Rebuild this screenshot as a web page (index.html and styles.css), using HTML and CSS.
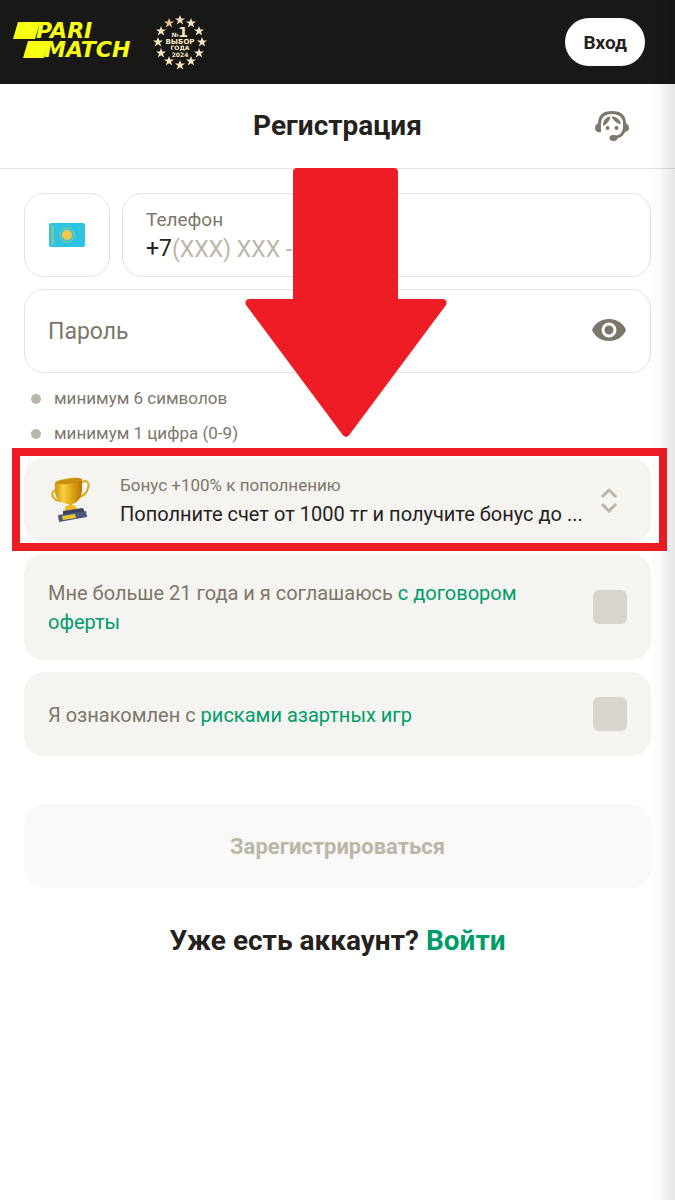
FILE: index.html
```html
<!DOCTYPE html>
<html lang="ru">
<head>
    <meta charset="UTF-8">
    <meta name="viewport" content="width=device-width, initial-scale=1.0">
    <title>Регистрация</title>
    <link rel="stylesheet" href="styles.css">
</head>
<body>
    <header class="topbar">
        <a class="logo" href="#" aria-label="Parimatch">
            <svg width="122" height="48" viewBox="0 0 122 48">
                <path d="M6 6H28L23 23H1ZM16 25H37L32 42H11Z" />
                <text x="24" y="22">PARI</text>
                <text x="32" y="41">MATCH</text>
            </svg>
        </a>
        <svg class="award" width="56" height="56" viewBox="0 0 56 56">
            <defs>
                <path id="star" d="M0-5 1.300-1.600H5L2 .8 3.200 4.500 0 2.300-3.200 4.500-2 .8-5-1.600H-1.300Z" />
            </defs>
            <use href="#star" x="28" y="6" />
            <use href="#star" x="39" y="9" />
            <use href="#star" x="47" y="17" />
            <use href="#star" x="50" y="28" />
            <use href="#star" x="47" y="39" />
            <use href="#star" x="39" y="47" />
            <use href="#star" x="28" y="51" />
            <use href="#star" x="17" y="47" />
            <use href="#star" x="9" y="39" />
            <use href="#star" x="6" y="28" />
            <use href="#star" x="9" y="17" />
            <use class="gold" href="#star" x="17" y="9" />
            <text x="23" y="23" font-size="6">№</text>
            <text x="31" y="23" font-size="14">1</text>
            <text x="28" y="30" font-size="7">ВЫБОР</text>
            <text x="28" y="36" font-size="6">ГОДА</text>
            <text x="28" y="43" font-size="6">2024</text>
        </svg>
        <button class="login-btn" type="button">Вход</button>
    </header>

    <div class="title-bar">
        <h1>Регистрация</h1>
        <button class="support" type="button" aria-label="Поддержка">
            <svg width="34" height="32" viewBox="0 0 34 32">
                <path class="line" d="M4.500 14C4.500 6 9.500 2.500 17 2.500S29.500 6 29.500 14V18C29 24 25 27 19 27.500" />
                <path d="M5 12C2.500 13 0 15 0 18S2.500 23 6 22V13ZM29 12C31.500 13 34 15 34 18S31.500 22 28.500 22Z" />
                <path d="M8 16C8 10 11 7 15.500 6.500C15 10.500 12 14 8 16ZM16.500 6.500C21 6.500 25 9 26 14C21.500 13.500 18.500 10.500 16.500 6.500Z" />
                <circle cx="12.500" cy="18" r="2" />
                <circle cx="21.500" cy="18" r="2" />
                <ellipse cx="18.500" cy="28" rx="4" ry="3" />
            </svg>
        </button>
    </div>

    <form class="form">
        <div class="phone-row">
            <button class="box country" type="button" aria-label="Казахстан">
                <svg width="36" height="24" viewBox="0 0 36 24">
                    <rect width="36" height="24" rx="2" fill="#2dc3e5" />
                    <path d="M2 2H5V22H2Z" fill="#67c5ae" />
                    <path d="M2 3 5 6 2 9 5 12 2 15 5 18 2 21" fill="none" stroke="#a5c779" />
                    <circle cx="18" cy="12" r="7" fill="none" stroke="#9ac979" stroke-width="2" stroke-dasharray="1 1" />
                    <circle cx="18" cy="12" r="5" fill="#f6c74d" />
                </svg>
            </button>
            <div class="box phone">
                <label for="phone">Телефон</label>
                <div class="phone-line">
                    <span>+7</span>
                    <input id="phone" type="tel" placeholder="(XXX) XXX - XX - XX">
                </div>
            </div>
        </div>

        <div class="box password">
            <input type="password" placeholder="Пароль" aria-label="Пароль">
            <button class="eye" type="button" aria-label="Показать пароль">
                <svg width="34" height="24" viewBox="0 0 34 24">
                    <path d="M0 11C3 4 9 0 17 0S31 4 34 11C31 18 25 22 17 22S3 18 0 11Z" />
                    <circle cx="17" cy="11" r="6" />
                </svg>
            </button>
        </div>

        <ul class="rules">
            <li>минимум 6 символов</li>
            <li>минимум 1 цифра (0-9)</li>
        </ul>

        <div class="highlight">
            <button class="card bonus" type="button">
                <svg class="cup" width="42" height="46" viewBox="0 0 42 46">
                    <defs>
                        <linearGradient id="gold" x1="0" x2="1" y1="0" y2="0">
                            <stop offset="0" stop-color="#cf9008" />
                            <stop offset="0.300" stop-color="#f7cf3f" />
                            <stop offset="0.600" stop-color="#e2aa18" />
                            <stop offset="1" stop-color="#b87305" />
                        </linearGradient>
                    </defs>
                    <path d="M7 14C1 12 0 18 3 21C5 24 9 24 12 23M30 6C35 2 39 5 37 11C36 16 32 19 28 20" fill="none" stroke="#dba71c" stroke-width="2" />
                    <path d="M4 6C6 2 25-1 31 2L31 14C30 22 26 26 21 27L22 30H17L18 27C10 27 4 22 4 14Z" fill="url(#gold)" />
                    <ellipse cx="17.500" cy="4.500" rx="13.500" ry="2.500" fill="#c98e10" transform="rotate(-6 17 5)" />
                    <path d="M14 30C16 28 23 27 25 30L27 33 14 35Z" fill="#f0b91c" />
                    <path d="M12 34 32 31 34 36 12 39Z" fill="#39425f" />
                    <path d="M7 38 35 34 36 40 8 45Z" fill="#4e5978" />
                    <path d="M11 39 24 37 25 41 12 43Z" fill="#eac42d" />
                </svg>
                <span class="bonus-text">
                    <span class="bonus-name">Бонус +100% к пополнению</span>
                    <span class="bonus-desc">Пополните счет от 1000 тг и получите бонус до ...</span>
                </span>
                <svg class="arrows" width="34" height="26" viewBox="0 0 34 26">
                    <path d="M9 10 16 3 23 10M9 17 16 24 23 17" />
                </svg>
            </button>
        </div>

        <div class="card consent">
            <label for="age">Мне больше 21 года и я соглашаюсь <a href="#">с договором оферты</a></label>
            <input id="age" type="checkbox">
        </div>
        <div class="card consent">
            <label for="risk">Я ознакомлен с <a href="#">рисками азартных игр</a></label>
            <input id="risk" type="checkbox">
        </div>

        <button class="submit" type="submit" disabled>Зарегистрироваться</button>
        <p class="have-account">Уже есть аккаунт? <a href="#">Войти</a></p>
    </form>

    <div class="edge-shade"></div>
    <svg class="pointer" width="202" height="270" viewBox="0 0 202 270">
        <path d="M52 0H149Q153 0 153 4V131H198Q203 132 201 137L105 266Q101 272 97 266L1 137Q-1 132 4 131H48V4Q48 0 52 0Z" />
    </svg>
</body>
</html>
```
FILE: styles.css
```css
:root { --ink: #25221e; --muted: #7d766b; --pale: #bcb5a9; --line: #e3e1dc; --card: #f5f4f0; --green: #009d6b; --red: #ee1c24; }
* { box-sizing: border-box; }
body { position: relative; min-height: 100vh; margin: 0; background: #fff; color: var(--ink); font-family: Roboto, "Liberation Sans", sans-serif; }
button, input { font-family: inherit; }
button { padding: 0; border: 0; background: none; cursor: pointer; }
svg { display: block; flex-shrink: 0; }
a { color: var(--green); text-decoration: none; }

.topbar { display: flex; align-items: center; height: 84px; padding: 0 30px 0 12px; background: #181816; }
.logo svg { margin-top: -4px; fill: #f8ff13; overflow: visible; }
.logo text { font: italic bold 22px "DejaVu Sans", sans-serif; }
.award { margin-left: 18px; fill: #f8e6c2; }
.award .gold { fill: #e9c18a; }
.award text { font-family: "DejaVu Sans", sans-serif; font-weight: bold; text-anchor: middle; }
.login-btn { height: 48px; margin-left: auto; padding: 0 18px; border-radius: 24px; background: #fff; color: var(--ink); font-size: 19px; font-weight: 700; }

.title-bar { display: grid; grid-template-columns: 34px 1fr 34px; align-items: center; height: 85px; padding: 0 46px; border-bottom: 1px solid var(--line); }
.title-bar h1 { grid-column: 2; margin: 0; font-size: 28px; font-weight: 700; line-height: 32px; text-align: center; }
.support svg { fill: var(--muted); }
.support .line { fill: none; stroke: var(--muted); stroke-width: 3; }

.form { padding: 24px; }
.box { height: 84px; border: 1px solid var(--line); border-radius: 20px; background: #fff; }
.phone-row { display: flex; gap: 12px; margin-bottom: 12px; }
.country { display: flex; align-items: center; justify-content: center; width: 86px; }
.phone { flex: 1; padding: 12px 23px; color: var(--muted); }
.phone label { display: block; font-size: 19px; line-height: 28px; }
.phone-line { display: flex; font-size: 23px; line-height: 30px; }
.phone-line span { color: var(--ink); }
.phone-line input { flex: 1; min-width: 0; }
.box input { padding: 0; border: 0; outline: 0; background: none; color: var(--ink); font-size: 23px; }
.phone input::placeholder { color: var(--pale); }
.password { display: flex; align-items: center; padding: 0 24px 0 23px; }
.password input { flex: 1; min-width: 0; }
.password input::placeholder { color: var(--muted); }
.eye svg { fill: var(--muted); }
.eye circle { stroke: #fff; stroke-width: 3; }

.rules { margin: 0; padding: 8px 0 7px; list-style: none; }
.rules li { display: flex; align-items: center; gap: 13px; padding-left: 7px; color: var(--muted); font-size: 17px; line-height: 35px; }
.rules li::before { content: ""; width: 10px; height: 10px; border-radius: 50%; background: var(--pale); }

.card { display: flex; align-items: center; width: 100%; min-height: 84px; padding: 24px; border-radius: 20px; background: var(--card); }
.highlight { position: relative; }
.highlight::after { content: ""; position: absolute; inset: -10px -16px -9px -12px; border: 8px solid var(--red); pointer-events: none; }
.bonus { gap: 27px; padding: 12px 24px 12px 27px; text-align: left; }
.bonus-text { flex: 1; min-width: 0; }
.bonus-text span { display: block; overflow: hidden; white-space: nowrap; text-overflow: ellipsis; }
.bonus-name { color: var(--muted); font-size: 17px; line-height: 28px; }
.bonus-desc { color: var(--ink); font-size: 20px; line-height: 30px; }
.bonus .arrows { margin-left: -27px; fill: none; stroke: var(--pale); stroke-width: 3; }
.consent { justify-content: space-between; gap: 48px; margin-top: 12px; color: var(--muted); font-size: 20px; line-height: 29px; }
.consent label { padding-top: 3px; }
.card.consent { padding: 22px 24px 23px; }
.consent input { flex-shrink: 0; appearance: none; width: 34px; height: 34px; margin: 0; border-radius: 6px; background: #d9d4cd; }

.submit { display: block; width: 100%; height: 84px; margin-top: 48px; border-radius: 20px; background: #faf9f7; color: var(--pale); font-size: 22px; font-weight: 700; }
.have-account { margin: 36px 0 0; font-size: 28px; font-weight: 700; line-height: 34px; text-align: center; }

.edge-shade { position: absolute; top: 0; right: 0; bottom: 0; width: 28px; background: linear-gradient(to right, rgba(0, 0, 0, 0), rgba(0, 0, 0, 0.02) 45%, rgba(0, 0, 0, 0.1)); pointer-events: none; }
.pointer { position: absolute; top: 168px; left: calc(50% - 93px); fill: var(--red); pointer-events: none; }
```
